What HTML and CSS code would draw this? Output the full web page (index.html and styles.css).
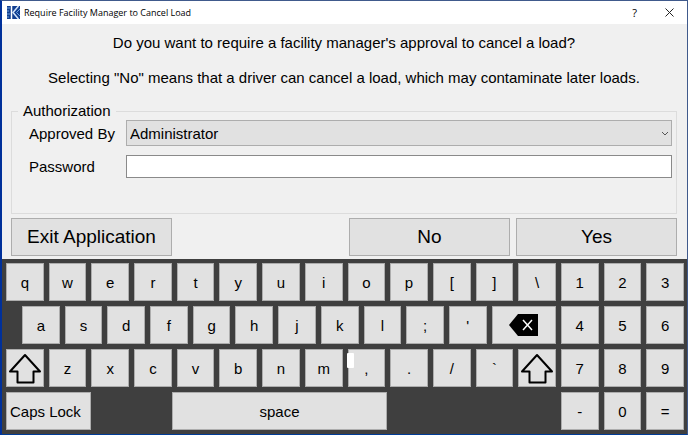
FILE: index.html
```html
<!DOCTYPE html>
<html lang="en">
<head>
    <meta charset="UTF-8">
    <meta name="viewport" content="width=device-width, initial-scale=1.0">
    <title>Require Facility Manager to Cancel Load</title>
    <link rel="stylesheet" href="styles.css">
</head>
<body>
    <div class="window">
        <header class="titlebar">
            <svg class="app-icon" viewBox="0 0 13 13" aria-hidden="true">
                <rect width="13" height="13" fill="#123f91"/>
                <path d="M0 2h3M0 5h2M0 8h3M0 11h2" stroke="#6fa3dc" stroke-width="1"/>
                <path d="M4.500 0v13" stroke="#fff" stroke-width="1.500"/>
                <path d="M11.500 0L6 6.500L11.500 13" fill="none" stroke="#d5e6fa" stroke-width="1.500"/>
                <path d="M13 3L9.500 6.500L13 10" fill="none" stroke="#6fa3dc" stroke-width="1"/>
            </svg>
            <h1>Require Facility Manager to Cancel Load</h1>
            <button type="button" class="title-btn">?</button>
            <button type="button" class="title-btn" aria-label="Close">
                <svg viewBox="0 0 9 9" width="9" height="9"><path d="M.5.5l8 8M8.500.5l-8 8" stroke="#222" fill="none"/></svg>
            </button>
        </header>

        <form class="dialog">
            <p>Do you want to require a facility manager's approval to cancel a load?</p>
            <p>Selecting "No" means that a driver can cancel a load, which may contaminate later loads.</p>

            <fieldset class="auth">
                <legend>Authorization</legend>
                <div class="fields">
                    <label for="approvedBy">Approved By</label>
                    <div class="select-wrap">
                        <select id="approvedBy">
                            <option>Administrator</option>
                        </select>
                        <svg class="chevron" viewBox="0 0 8 6" aria-hidden="true"><path d="M1 1l3 3l3-3" fill="none" stroke="#555"/></svg>
                    </div>
                    <label for="password">Password</label>
                    <input type="password" id="password">
                </div>
            </fieldset>

            <div class="actions">
                <button type="button" class="exit">Exit Application</button>
                <button type="button">No</button>
                <button type="button">Yes</button>
            </div>
        </form>

        <div class="keyboard">
            <div class="row">
                <button class="key">q</button>
                <button class="key">w</button>
                <button class="key">e</button>
                <button class="key">r</button>
                <button class="key">t</button>
                <button class="key">y</button>
                <button class="key">u</button>
                <button class="key">i</button>
                <button class="key">o</button>
                <button class="key">p</button>
                <button class="key">[</button>
                <button class="key">]</button>
                <button class="key">\</button>
                <button class="key">1</button>
                <button class="key">2</button>
                <button class="key">3</button>
            </div>
            <div class="row row-home">
                <button class="key">a</button>
                <button class="key">s</button>
                <button class="key">d</button>
                <button class="key">f</button>
                <button class="key">g</button>
                <button class="key">h</button>
                <button class="key">j</button>
                <button class="key">k</button>
                <button class="key">l</button>
                <button class="key">;</button>
                <button class="key">'</button>
                <button class="key key-backspace" aria-label="Backspace">
                    <svg viewBox="0 0 30 24" width="30" height="24">
                        <path d="M0 12L9 1h20v22H9z" fill="#000"/>
                        <path d="M14 7l9 10M23 7l-9 10" stroke="#fff" stroke-width="1.500"/>
                    </svg>
                </button>
                <button class="key">4</button>
                <button class="key">5</button>
                <button class="key">6</button>
            </div>
            <div class="row">
                <button class="key" aria-label="Left shift">
                    <svg viewBox="0 0 34 31" width="34" height="31"><path d="M17 2L2 18.500h7.500V29.500h16V18.500H32z" fill="none" stroke="#000" stroke-width="2" stroke-linejoin="round"/></svg>
                </button>
                <button class="key">z</button>
                <button class="key">x</button>
                <button class="key">c</button>
                <button class="key">v</button>
                <button class="key">b</button>
                <button class="key">n</button>
                <button class="key">m</button>
                <button class="key key-comma">,</button>
                <button class="key">.</button>
                <button class="key">/</button>
                <button class="key">`</button>
                <button class="key" aria-label="Right shift">
                    <svg viewBox="0 0 34 31" width="34" height="31"><path d="M17 2L2 18.500h7.500V29.500h16V18.500H32z" fill="none" stroke="#000" stroke-width="2" stroke-linejoin="round"/></svg>
                </button>
                <button class="key">7</button>
                <button class="key">8</button>
                <button class="key">9</button>
            </div>
            <div class="row row-bottom">
                <button class="key key-caps">Caps Lock</button>
                <button class="key key-space">space</button>
                <button class="key key-minus">-</button>
                <button class="key">0</button>
                <button class="key">=</button>
            </div>
        </div>
    </div>
</body>
</html>
```

FILE: styles.css
```css
* {
    box-sizing: border-box;
}
body {
    margin: 0;
    font-family: "Liberation Sans", Arial, sans-serif;
    font-size: 15px;
    color: #000;
}
button, input, select {
    margin: 0;
    padding: 0;
    font: inherit;
    color: inherit;
    border-radius: 0;
}
.window {
    --key: calc((100vw - 85px) / 16);
    display: flex;
    flex-direction: column;
    min-height: 100vh;
    background-color: #f0f0f0;
    border: 1px solid #405a8c;
    border-left: 2px solid #00309a;
    border-bottom-color: #003c96;
}
.titlebar {
    display: flex;
    align-items: center;
    height: 23px;
    padding-left: 5px;
    background-color: #fff;
}
.app-icon {
    width: 13px;
    height: 13px;
    margin-right: 4px;
}
.titlebar h1 {
    flex: 1;
    margin: 0;
    font-family: "Open Sans", sans-serif;
    font-size: 9px;
    font-weight: normal;
}
.title-btn {
    display: flex;
    align-items: center;
    justify-content: center;
    width: 35px;
    height: 23px;
    border: none;
    background: none;
    font-family: "Open Sans", sans-serif;
    font-size: 11px;
}
.dialog {
    padding: 9px 10px 3px 9px;
}
.dialog p {
    margin: 0 0 15px;
    line-height: 20px;
    text-align: center;
}
.auth {
    margin: 0;
    padding: 1px 4px 35px 17px;
    border: 1px solid #dcdcdc;
}
.auth legend {
    margin-left: -11px;
    padding: 0 5px;
    line-height: 16px;
}
.fields {
    display: grid;
    grid-template-columns: 97px 1fr;
    row-gap: 9px;
    align-items: center;
}
.select-wrap {
    position: relative;
}
.fields select {
    display: block;
    width: 100%;
    height: 26px;
    padding-left: 3px;
    appearance: none;
    background-color: #e1e1e1;
    border: 1px solid #adadad;
}
.chevron {
    position: absolute;
    right: 3px;
    top: 11px;
    width: 8px;
    height: 6px;
}
.fields input {
    width: 100%;
    height: 23px;
    border: 1px solid #8a8a8a;
    background-color: #fff;
}
.actions {
    display: flex;
    gap: 6px;
    margin-top: 4px;
}
.actions button {
    width: calc((100% - 22px) / 4);
    height: 38px;
    background-color: #e1e1e1;
    border: 1px solid #adadad;
    font-size: 19px;
}
.actions .exit {
    margin-right: auto;
}
.keyboard {
    flex: 1;
    display: grid;
    grid-template-rows: repeat(4, 1fr);
    gap: 5px;
    padding: 4px 3px 4px 4px;
    background-color: #3f3f3f;
}
.row {
    display: flex;
    gap: 5px;
}
.key {
    display: flex;
    align-items: center;
    justify-content: center;
    width: var(--key);
    flex-shrink: 0;
    background-color: #e1e1e1;
    border: 1px solid #adadad;
}
.key svg {
    flex-shrink: 0;
}
.row-home {
    padding-left: 16px;
}
.key-backspace {
    flex: 1;
}
.key-comma {
    position: relative;
}
.key-comma::before {
    content: "";
    position: absolute;
    left: -2px;
    top: 3px;
    width: 7px;
    height: 15px;
    border-radius: 1px;
    background-color: #fff;
}
.key-caps {
    width: calc(var(--key) * 2 + 10px);
    justify-content: flex-start;
    padding-left: 3px;
}
.key-space {
    width: calc(var(--key) * 5 + 27px);
    margin-left: calc(var(--key) * 2);
}
.key-minus {
    margin-left: auto;
}
```
